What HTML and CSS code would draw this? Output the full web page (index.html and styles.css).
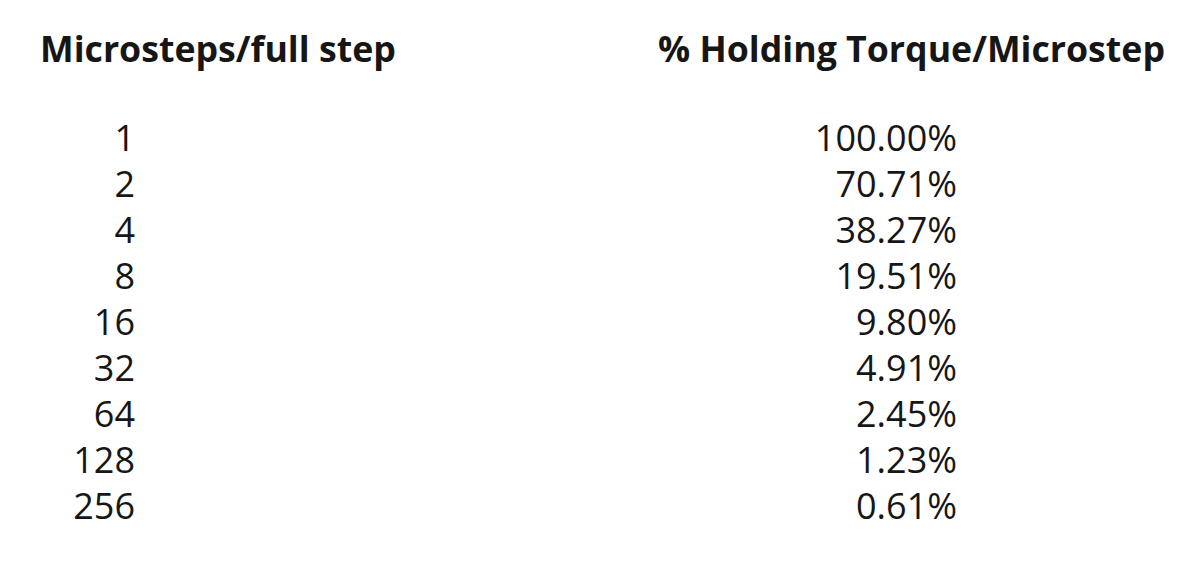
FILE: index.html
```html
<!DOCTYPE html>
<html>
<head>
<meta charset="utf-8">
<link rel="stylesheet" href="styles.css">
</head>
<body>
<div class="sheet">
  <div class="head">
    <span class="h-left">Microsteps/full step</span>
    <span class="h-right">% Holding Torque/Microstep</span>
  </div>
  <div class="rows">
    <span>1</span><span>100.00%</span>
    <span>2</span><span>70.71%</span>
    <span>4</span><span>38.27%</span>
    <span>8</span><span>19.51%</span>
    <span>16</span><span>9.80%</span>
    <span>32</span><span>4.91%</span>
    <span>64</span><span>2.45%</span>
    <span>128</span><span>1.23%</span>
    <span>256</span><span>0.61%</span>
  </div>
</div>
</body>
</html>
```
FILE: styles.css
```css
html, body {
  margin: 0;
  padding: 0;
  background: #fff;
}
.sheet {
  width: 1198px;
  height: 568px;
  font-family: "Open Sans", "Liberation Sans", sans-serif;
  color: #161616;
  padding-top: 22px;
  box-sizing: border-box;
}
.head {
  display: flex;
  font-weight: 700;
  font-size: 35.7px;
  line-height: 52px;
  padding-left: 40px;
}
.h-right {
  margin-left: auto;
  padding-right: 33px;
}
.rows {
  margin-top: 41px;
  display: grid;
  grid-template-columns: 135px 822px;
  font-size: 36px;
  line-height: 46px;
  text-align: right;
}
```
